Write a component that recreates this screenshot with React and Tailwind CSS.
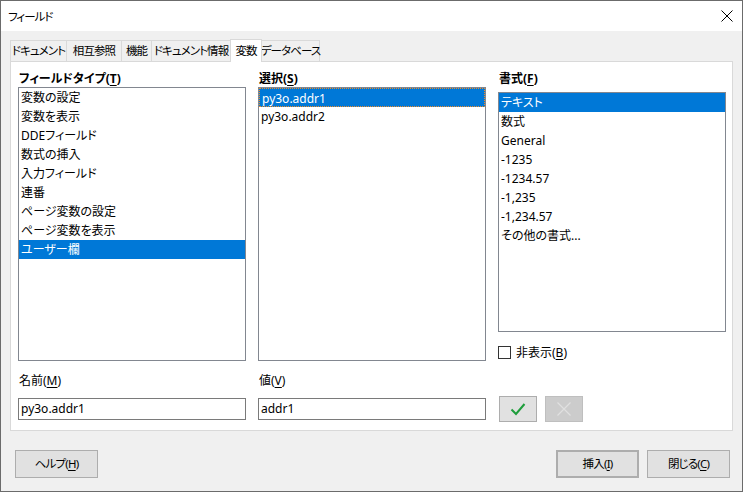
import React from "react";

const U = ({ children }) => <span className="underline underline-offset-2">{children}</span>;

function ListBox({ items, selected, focus, className }) {
  return (
    <div className={"border border-[#828790] bg-white flex flex-col " + className}>
      {items.map((it, i) => (
        <div
          key={i}
          className={
            "h-[19px] leading-[19px] pl-[2px] whitespace-nowrap " +
            (i === selected
              ? "bg-[#0078d7] text-white " + (focus ? "border border-dotted border-[#f08c28] pl-[1px] leading-[17px]" : "")
              : "text-black")
          }
        >
          {it}
        </div>
      ))}
    </div>
  );
}

function Btn({ children, className = "" }) {
  return (
    <div className={"h-[28px] w-[83px] flex items-center justify-center bg-[#e1e1e1] border border-[#adadad] text-black text-[11.5px] tracking-[-0.8px] " + className}>
      {children}
    </div>
  );
}

export default function App() {
  const tabs = [
    ["ドキュメント", 57],
    ["相互参照", 56],
    ["機能", 31],
    ["ドキュメント情報", 80],
    ["変数", 32],
    ["データベース", 59],
  ];
  return (
    <div className="w-[744px] h-[493px] bg-white font-['Noto_Sans','Noto_Sans_CJK_JP',sans-serif] [font-feature-settings:'palt'] text-[12px] text-black">
      <div className="w-[743px] h-[492px] border border-[#6b6b6b] flex flex-col">
        {/* title bar */}
        <div className="h-[30px] bg-white flex items-center justify-between pl-[7px] pr-[8px]">
          <span className="text-[11.5px] tracking-[-1px] leading-none mt-[1px]">フィールド</span>
          <svg width="12" height="12" viewBox="0 0 12 12" className="mr-[1px]">
            <path d="M0.5 0.5 L11.5 11.5 M11.5 0.5 L0.5 11.5" stroke="#000" strokeWidth="1" />
          </svg>
        </div>
        {/* body */}
        <div className="flex-1 bg-[#f0f0f0] px-[9px] pt-[8px] flex flex-col">
          {/* tabs */}
          <div className="flex items-end h-[22px] relative z-10">
            {tabs.map(([t, w], i) => {
              const active = t === "変数";
              return (
                <div
                  key={i}
                  style={{ width: w }}
                  className={
                    "flex items-center justify-center whitespace-nowrap border border-[#d9d9d9] text-[11.5px] tracking-[-0.9px] " +
                    (i > 0 ? "-ml-px " : "") +
                    (active
                      ? "h-[23px] bg-white border-b-0 -mb-px pb-[1px] relative z-10"
                      : "h-[21px] bg-[#f0f0f0] border-b-0")
                  }
                >
                  {t}
                </div>
              );
            })}
          </div>
          {/* panel */}
          <div className="w-[723px] h-[370px] border border-[#d9d9d9] bg-white pl-[7px] pt-[9px] flex flex-col">
            <div className="flex gap-[12px]">
              <div className="w-[228px] flex flex-col">
                <div className="h-[16px] leading-[16px] font-bold ml-px">フィールドタイプ(<U>T</U>)</div>
                <ListBox
                  className="h-[274px]"
                  selected={8}
                  items={[
                    "変数の設定",
                    "変数を表示",
                    "DDEフィールド",
                    "数式の挿入",
                    "入力フィールド",
                    "連番",
                    "ページ変数の設定",
                    "ページ変数を表示",
                    "ユーザー欄",
                  ]}
                />
              </div>
              <div className="w-[228px] flex flex-col">
                <div className="h-[16px] leading-[16px] font-bold ml-px">選択(<U>S</U>)</div>
                <ListBox className="h-[274px]" selected={0} focus items={["py3o.addr1", "py3o.addr2"]} />
              </div>
              <div className="w-[228px] flex flex-col">
                <div className="h-[16px] leading-[16px] font-bold ml-px">書式(<U>F</U>)</div>
                <ListBox
                  className="h-[240px] mt-[5px]"
                  selected={0}
                  items={["テキスト", "数式", "General", "-1235", "-1234.57", "-1,235", "-1,234.57", "その他の書式..."]}
                />
                <div className="flex items-center mt-[14px] h-[13px]">
                  <div className="w-[13px] h-[13px] border border-[#333] bg-white" />
                  <span className="ml-[5px] leading-none">
                    非表示(<U>B</U>)
                  </span>
                </div>
              </div>
            </div>
            <div className="flex gap-[12px] mt-[12px]">
              <div className="w-[228px] flex flex-col">
                <div className="h-[16px] leading-[16px] ml-px">名前(<U>M</U>)</div>
                <div className="mt-[9px] h-[22px] border border-[#7a7a7a] bg-white pl-[2px] leading-[20px]">py3o.addr1</div>
              </div>
              <div className="w-[228px] flex flex-col">
                <div className="h-[16px] leading-[16px] ml-px">値(<U>V</U>)</div>
                <div className="mt-[9px] h-[22px] border border-[#7a7a7a] bg-white pl-[2px] leading-[20px]">addr1</div>
              </div>
              <div className="w-[228px] flex pt-[23px] pl-px gap-[8px]">
                <div className="w-[38px] h-[26px] bg-[#e1e1e1] border border-[#adadad] flex items-center justify-center">
                  <svg width="16" height="14" viewBox="0 0 16 14">
                    <path d="M1.5 7.5 L6 12 L14.5 2" stroke="#1f9e3c" strokeWidth="2" fill="none" />
                  </svg>
                </div>
                <div className="w-[38px] h-[26px] bg-[#cccccc] border border-[#bfbfbf] flex items-center justify-center">
                  <svg width="16" height="16" viewBox="0 0 16 16">
                    <path d="M1.5 1.5 L14.5 14.5 M14.5 1.5 L1.5 14.5" stroke="#e0e0e0" strokeWidth="1.2" />
                  </svg>
                </div>
              </div>
            </div>
          </div>
          {/* bottom buttons */}
          <div className="flex items-center pt-[19px] pl-[5px] pr-[3px]">
            <Btn>
              ヘルプ(<U>H</U>)
            </Btn>
            <div className="flex-1" />
            <div className="flex gap-[8px]">
              <Btn className="border-2 border-[#0078d7]">
                挿入(<U>I</U>)
              </Btn>
              <Btn>
                閉じる(<U>C</U>)
              </Btn>
            </div>
          </div>
        </div>
      </div>
    </div>
  );
}
